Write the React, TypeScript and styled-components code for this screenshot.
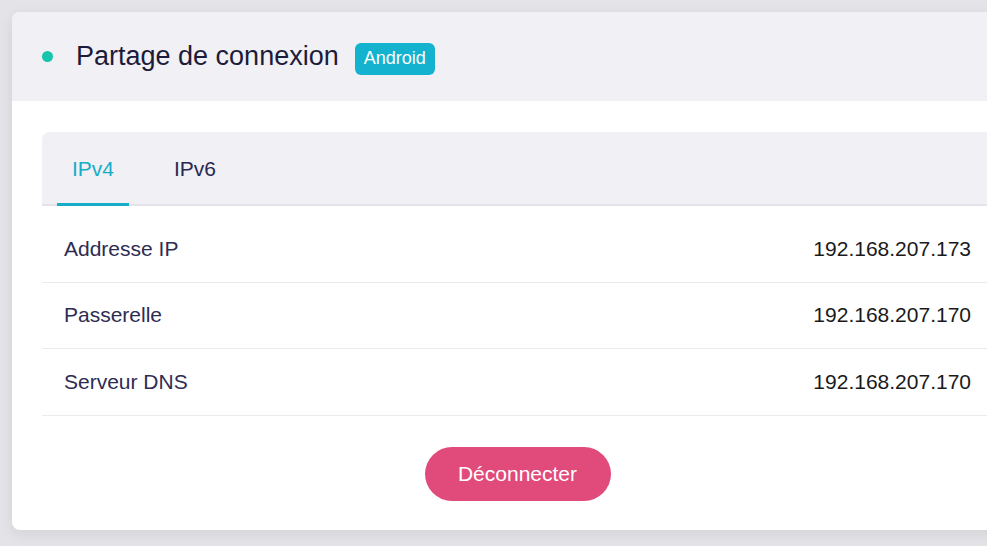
import React, { useState } from "react";
import styled, { createGlobalStyle } from "styled-components";

const Global = createGlobalStyle`
  html, body { margin: 0; padding: 0; }
  body {
    background: #e4e4e8;
    font-family: "Liberation Sans", Arial, sans-serif;
    overflow: hidden;
    width: 987px;
    height: 546px;
  }
`;

const Page = styled.div`
  padding: 12px;
  width: 1040px;
`;

const Card = styled.section`
  width: 1011px;
  background: #ffffff;
  border-radius: 8px;
  overflow: hidden;
  box-shadow: 0 4px 14px rgba(0, 0, 0, 0.08);
`;

const Header = styled.header`
  height: 89px;
  background: #f0f0f5;
  display: flex;
  align-items: center;
  padding: 0 30px;
  box-sizing: border-box;
`;

const Dot = styled.span`
  width: 11px;
  height: 11px;
  border-radius: 50%;
  background: #17c4ad;
  margin-right: 23px;
  flex: none;
`;

const Title = styled.h1`
  margin: 0;
  font-size: 27px;
  font-weight: 400;
  color: #1d1b3a;
`;

const Badge = styled.span`
  margin-left: 16px;
  margin-top: 4px;
  background: #13b3cf;
  color: #ffffff;
  font-size: 18px;
  height: 32px;
  padding: 0 9px;
  border-radius: 6px;
  display: inline-flex;
  align-items: center;
`;

const Body = styled.div`
  padding: 31px 30px 29px;
  display: flex;
  flex-direction: column;
  align-items: center;
`;

const Panel = styled.div`
  width: 100%;
  border-radius: 8px 8px 0 0;
  overflow: hidden;
`;

const TabBar = styled.div`
  height: 74px;
  box-sizing: border-box;
  background: #f0f0f5;
  border-bottom: 2px solid #e3e3e9;
  display: flex;
  gap: 30px;
  padding-left: 15px;
`;

const Tab = styled.button<{ $active?: boolean }>`
  border: none;
  background: transparent;
  padding: 2px 15px 0;
  margin-bottom: -2px;
  font-family: inherit;
  font-size: 21px;
  color: ${(p) => (p.$active ? "#17acc8" : "#2a2850")};
  border-bottom: 3px solid ${(p) => (p.$active ? "#17acc8" : "transparent")};
  cursor: pointer;
  display: flex;
  align-items: center;
`;

const Rows = styled.div`
  padding-top: 10px;
`;

const Row = styled.div`
  height: 66.5px;
  box-sizing: border-box;
  border-bottom: 1px solid #ebebee;
  display: flex;
  align-items: center;
  justify-content: space-between;
  padding: 0 22px;
  font-size: 21px;
`;

const Label = styled.span`
  color: #2e2c52;
`;

const Value = styled.span`
  color: #1a1a1a;
`;

const Disconnect = styled.button`
  margin-top: 31px;
  height: 54px;
  width: 186px;
  border: none;
  border-radius: 27px;
  background: #e04b7b;
  color: #ffffff;
  font-family: inherit;
  font-size: 21px;
  cursor: pointer;
`;

const data = [
  { label: "Addresse IP", value: "192.168.207.173" },
  { label: "Passerelle", value: "192.168.207.170" },
  { label: "Serveur DNS", value: "192.168.207.170" },
];

export default function App() {
  const [tab, setTab] = useState("IPv4");
  return (
    <Page>
      <Global />
      <Card>
        <Header>
          <Dot />
          <Title>Partage de connexion</Title>
          <Badge>Android</Badge>
        </Header>
        <Body>
          <Panel>
            <TabBar>
              {["IPv4", "IPv6"].map((t) => (
                <Tab key={t} $active={tab === t} onClick={() => setTab(t)}>
                  {t}
                </Tab>
              ))}
            </TabBar>
            <Rows>
              {data.map((r) => (
                <Row key={r.label}>
                  <Label>{r.label}</Label>
                  <Value>{r.value}</Value>
                </Row>
              ))}
            </Rows>
          </Panel>
          <Disconnect>Déconnecter</Disconnect>
        </Body>
      </Card>
    </Page>
  );
}
